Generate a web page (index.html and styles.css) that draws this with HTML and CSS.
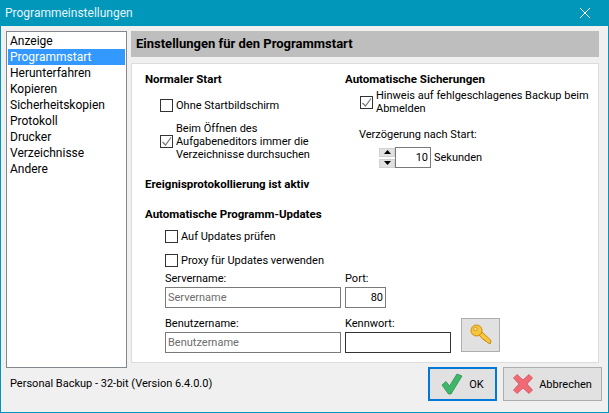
FILE: index.html
```html
<!DOCTYPE html>
<html lang="de">
<head>
<meta charset="utf-8">
<title>Programmeinstellungen</title>
<link rel="stylesheet" href="styles.css">
</head>
<body>
<div class="window">
  <header class="titlebar">
    <span>Programmeinstellungen</span>
    <svg class="close" width="10" height="10" viewBox="0 0 10 10"><path d="M0 0L10 10M10 0L0 10" stroke="#fff" stroke-width="1" fill="none"/></svg>
  </header>
  <div class="main">
    <ul class="nav">
      <li>Anzeige</li>
      <li class="selected">Programmstart</li>
      <li>Herunterfahren</li>
      <li>Kopieren</li>
      <li>Sicherheitskopien</li>
      <li>Protokoll</li>
      <li>Drucker</li>
      <li>Verzeichnisse</li>
      <li>Andere</li>
    </ul>
    <div class="content">
      <h1 class="banner">Einstellungen für den Programmstart</h1>
      <section class="panel">
        <div class="columns">
          <div class="col-left">
            <h2 class="head">Normaler Start</h2>
            <label class="check ohne"><span class="box"></span><span>Ohne Startbildschirm</span></label>
            <label class="check beim"><span class="box"><svg viewBox="0 0 11 11"><path d="M1.500 6L4.500 9L10 1.500" stroke="#777" stroke-width="1.200" fill="none"/></svg></span><span>Beim Öffnen des<br>Aufgabeneditors immer die<br>Verzeichnisse durchsuchen</span></label>
            <h2 class="head ereignis">Ereignisprotokollierung ist aktiv</h2>
          </div>
          <div class="col-right">
            <h2 class="head">Automatische Sicherungen</h2>
            <label class="check hinweis"><span class="box"><svg viewBox="0 0 11 11"><path d="M1.500 6L4.500 9L10 1.500" stroke="#777" stroke-width="1.200" fill="none"/></svg></span><span>Hinweis auf fehlgeschlagenes Backup beim<br>Abmelden</span></label>
            <div class="delay">Verzögerung nach Start:</div>
            <div class="spin-row">
              <div class="spin">
                <span class="arrow"><svg width="7" height="4" viewBox="0 0 7 4"><path d="M3.500 0L7 4H0Z" fill="#000"/></svg></span>
                <span class="arrow"><svg width="7" height="4" viewBox="0 0 7 4"><path d="M0 0H7L3.500 4Z" fill="#000"/></svg></span>
              </div>
              <div class="field spin-val">10</div>
              <span class="unit">Sekunden</span>
            </div>
          </div>
        </div>
        <h2 class="head updates">Automatische Programm-Updates</h2>
        <div class="update-body">
          <label class="check auf"><span class="box"></span><span>Auf Updates prüfen</span></label>
          <label class="check proxy"><span class="box"></span><span>Proxy für Updates verwenden</span></label>
          <div class="form">
            <span class="lab">Servername:</span><span class="lab">Port:</span><span></span>
            <div class="field ph">Servername</div><div class="field port">80</div><span></span>
            <span class="lab">Benutzername:</span><span class="lab">Kennwort:</span>
            <button class="btn key" type="button"><svg width="22" height="22" viewBox="0 0 22 22"><g fill="#f6c53c" stroke="#c98a10" stroke-width="1" stroke-linejoin="round"><path d="M9 11L12 8L21 16.500L20.500 19.500L18 19L16.500 17.500L15 17L14.500 15.500L13 15.500Z"/><circle cx="6.500" cy="6.500" r="5.500"/></g><circle cx="5.500" cy="5" r="1.700" fill="#fdeaa0" stroke="#c98a10" stroke-width=".8"/></svg></button>
            <div class="field ph">Benutzername</div><div class="field pw"></div>
          </div>
        </div>
      </section>
    </div>
  </div>
  <footer class="footer">
    <span class="version">Personal Backup - 32-bit (Version 6.4.0.0)</span>
    <div class="actions">
      <button class="btn action ok" type="button"><svg width="22" height="22" viewBox="0 0 22 22"><path d="M1 12L5 8.500L8.500 13L16 1L21 3L10 21H7.500Z" fill="#3fb768" stroke="#2b8f50" stroke-width=".8"/></svg><span>OK</span></button>
      <button class="btn action cancel" type="button"><svg width="20" height="20" viewBox="0 0 20 20"><path d="M4 0.500L10 6L16 0.500L19.500 4L14 10L19.500 16L16 19.500L10 14L4 19.500L0.500 16L6 10L0.500 4Z" fill="#ee6a74" stroke="#d8505c" stroke-width=".8"/></svg><span>Abbrechen</span></button>
    </div>
  </footer>
</div>
</body>
</html>
```
FILE: styles.css
```css
* { box-sizing: border-box; }
html, body { margin: 0; padding: 0; }
body { font-family: Roboto, "Noto Sans", sans-serif; font-size: 11px; line-height: 13px; color: #000; }
.window { width: 609px; height: 413px; background: #f0f0f0; border: 1px solid #0097bb; border-top: 0; display: flex; flex-direction: column; overflow: hidden; }
.titlebar { height: 26px; flex: none; margin: 0 -1px; padding: 0 19px 0 5px; background: #0097bb; color: #e6f4f8; font-size: 12px; display: flex; align-items: center; justify-content: space-between; }
.main { flex: none; display: flex; height: 337px; padding: 5px 0 0 5px; gap: 4px; }
.nav { list-style: none; margin: 0; padding: 1px; width: 121px; height: 337px; background: #fff; border: 1px solid #828790; font-size: 12px; line-height: 16px; }
.nav li { padding-left: 2px; height: 16px; white-space: nowrap; }
.nav .selected { background: #3399ff; color: #fff; }
.content { width: 468px; display: flex; flex-direction: column; gap: 6px; }
.banner { margin: 0; height: 26px; background: #bebebe; font-size: 13px; line-height: 26px; padding-left: 5px; font-weight: 700; }
.panel { height: 305px; background: #fff; border: 1px solid #dcdcdc; padding: 9px 0 0 13px; }
.columns { display: flex; }
.col-left { width: 200px; }
.head { margin: 0; font-size: 11.500px; line-height: 13px; font-weight: 700; }
.check { display: flex; align-items: center; gap: 3px; }
.box { width: 13px; height: 13px; flex: none; background: #fff; border: 1px solid #333; display: block; }
.box svg { display: block; width: 11px; height: 11px; }
.ohne { margin: 13px 0 0 15px; }
.beim { margin: 10px 0 0 15px; }
.ereignis { margin-top: 17px; }
.hinweis { margin: 3px 0 0 15px; }
.delay { margin: 13px 0 0 14px; }
.spin-row { display: flex; align-items: center; margin: 6px 0 0 34px; }
.spin { width: 16px; height: 20px; display: flex; flex-direction: column; justify-content: space-between; }
.arrow { height: 9px; background: #e1e1e1; border: 1px solid #d0d0d0; display: flex; align-items: center; justify-content: center; }
.arrow svg { display: block; }
.field { background: #fff; border: 1px solid #7a7a7a; height: 21px; line-height: 19px; padding: 0 2px; }
.spin-val { width: 36px; text-align: right; }
.unit { margin-left: 3px; }
.updates { margin-top: 17px; }
.update-body { margin-left: 20px; }
.auf { margin-top: 9px; }
.proxy { margin-top: 11px; }
.form { margin-top: 5px; display: grid; grid-template-columns: 176px 106px 39px; column-gap: 4px; grid-template-rows: 15px 21px 24px 21px; }
.lab { align-self: end; padding-bottom: 2px; }
.ph { color: #6d6d6d; }
.port { width: 41px; text-align: right; }
.pw { border-color: #333; }
.btn { background: #e1e1e1; border: 1px solid #adadad; padding: 0; font: inherit; color: #000; display: flex; align-items: center; justify-content: center; }
.key { grid-column: 3; grid-row: 3 / 5; align-self: end; margin: 0 0 1px 6px; width: 39px; height: 34px; }
.footer { flex: 1; display: flex; align-items: flex-start; justify-content: space-between; padding: 4px 6px 0 9px; }
.version { margin-top: 10px; }
.actions { display: flex; gap: 6px; }
.action { height: 34px; gap: 6px; }
.ok { width: 69px; border: 2px solid #0078d7; }
.cancel { width: 99px; }
```
